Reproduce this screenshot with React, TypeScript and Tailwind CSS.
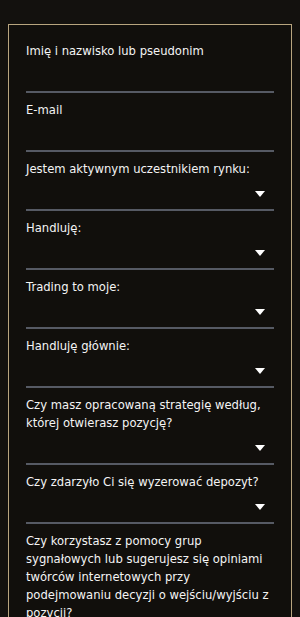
const fields: { label: string; select?: boolean }[] = [
  { label: "Imię i nazwisko lub pseudonim" },
  { label: "E-mail" },
  { label: "Jestem aktywnym uczestnikiem rynku:", select: true },
  { label: "Handluję:", select: true },
  { label: "Trading to moje:", select: true },
  { label: "Handluję głównie:", select: true },
  { label: "Czy masz opracowaną strategię według, której otwierasz pozycję?", select: true },
  { label: "Czy zdarzyło Ci się wyzerować depozyt?", select: true },
  {
    label:
      "Czy korzystasz z pomocy grup sygnałowych lub sugerujesz się opiniami twórców internetowych przy podejmowaniu decyzji o wejściu/wyjściu z pozycji?",
    select: true,
  },
];

function Caret() {
  return (
    <svg width="10" height="6" viewBox="0 0 10 6" className="text-white">
      <path d="M0 0 H10 L5 6 Z" fill="currentColor" />
    </svg>
  );
}

export default function App() {
  return (
    <div
      className="min-h-[617px] w-[300px] bg-[#13110e] px-2 pt-6 text-[#f4f4f4]"
      style={{ fontFamily: '"DejaVu Sans", sans-serif' }}
    >
      <form className="border border-[#b8a57f] bg-[#110f0c] px-[17px] pt-[17px]">
        {fields.map((f, i) => (
          <div key={i} className={i > 0 ? "pt-2" : ""}>
            <label className="block text-[11.6px] leading-[18px]">{f.label}</label>
            <div className="flex h-[31px] items-center justify-end pr-[9px]">
              {f.select && <Caret />}
            </div>
            <div className="h-[2px] bg-[#565a64]" />
          </div>
        ))}
      </form>
    </div>
  );
}
